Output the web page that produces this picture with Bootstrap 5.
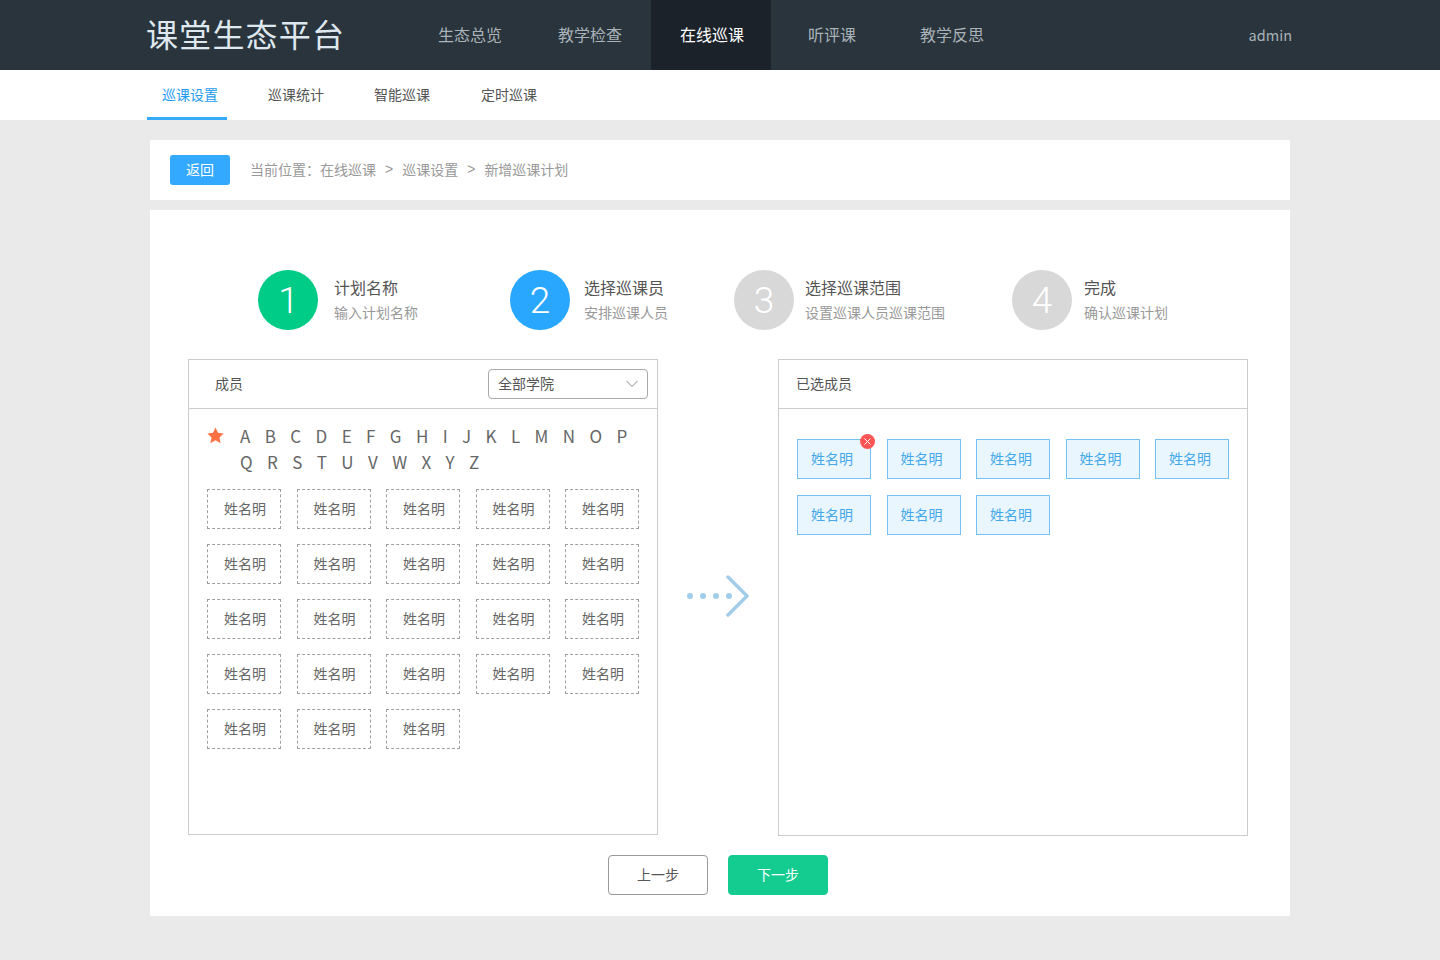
<!DOCTYPE html>
<html lang="zh-CN">
<head>
    <meta charset="UTF-8">
    <title>课堂生态平台</title>
    <link rel="stylesheet" href="https://cdn.jsdelivr.net/npm/bootstrap@5.3.0/dist/css/bootstrap.min.css">
    <style>
        body {
            background-color: #eaeaea;
            font-family: "Noto Sans CJK SC", "Noto Sans", sans-serif;
            font-size: 14px;
            color: #666;
        }
        .topbar { height: 70px; background-color: #29343c; }
        .topbar-inner { width: 1146px; height: 70px; margin: 0 auto; }
        .brand-name { width: 263px; height: 70px; margin-left: -1px; margin-right: 1px; font-size: 32px; letter-spacing: 1.2px; color: #dfe8ee; line-height: 66px; white-space: nowrap; }
        .top-link { width: 120px; height: 70px; line-height: 68px; text-align: center; font-size: 16px; color: #a9b3b9; text-decoration: none; }
        .top-link.is-active { background-color: #1b2229; color: #fff; margin: 0 1px; padding-left: 2px; }
        .admin-name { font-size: 14.5px; color: #a9b3b9; padding-right: 1px; }
        .subbar { height: 50px; background-color: #fff; }
        .sub-link { width: 80px; height: 50px; line-height: 48px; padding-left: 15px; margin-right: 26px; color: #555; text-decoration: none; white-space: nowrap; }
        .sub-link:nth-child(4) { margin-left: 1px; }
        .sub-link.is-active { color: #1f9bf0; border-bottom: 3px solid #33a9ff; }
        .page-wrap { width: 1140px; margin: 20px auto 44px; }
        .crumb-box { height: 60px; padding-left: 20px; background-color: #fff; margin-bottom: 10px; color: #999; }
        .crumb-box span { margin-bottom: 2px; }
        .back-btn { width: 60px; height: 30px; padding: 0 0 2px; margin-right: 20px; font-size: 14px; color: #fff; background-color: #33a9ff; border: 0; border-radius: 3px; }
        .crumb-box .crumb-sep { margin: 0 9px 2px 9px; font-family: "Liberation Sans", sans-serif; }
        .main-box { height: 706px; padding: 60px 38px 0; background-color: #fff; }
        .step-row { height: 60px; padding-left: 70px; margin-bottom: 29px; }
        .step-item:nth-child(1) { margin-right: 92px; }
        .step-item:nth-child(2) { margin-right: 66px; }
        .step-item:nth-child(3) { margin-right: 67px; }
        .step-num { width: 60px; height: 60px; margin-right: 14px; border-radius: 50%; font-size: 37px; font-family: Roboto, sans-serif; font-weight: 300; line-height: 61px; text-align: center; color: #fff; background-color: #d8d8d8; }
        .step-item:nth-child(1) .step-num { background-color: #00cc88; margin-right: 16px; padding-left: 1px; }
        .step-item:nth-child(2) .step-num { background-color: #29a7ff; }
        .step-item:nth-child(3) .step-num { margin-right: 11px; }
        .step-item:nth-child(4) .step-num { margin-right: 12px; }
        .step-title { font-size: 16px; line-height: 24px; color: #555; margin-top: 5px; margin-bottom: 1px; }
        .step-desc { line-height: 24px; color: #999; }
        .pick-panel { width: 470px; height: 476px; border: 1px solid #ccc; border-radius: 0; }
        .pick-panel.is-right { height: 477px; }
        .pick-head { height: 49px; padding: 0 9px 0 26px; background-color: #fff; border-bottom: 1px solid #ccc; border-radius: 0 !important; color: #555; }
        .pick-head span { margin-bottom: 2px; }
        .is-right .pick-head { padding-left: 17px; }
        .college-select { width: 160px; height: 30px; padding: 0 24px 2px 9px; font-size: 14px; color: #555; border-color: #aaa; border-radius: 4px; background-position: right 9px center; background-size: 12px 8px; background-image: url("data:image/svg+xml,%3csvg xmlns='http://www.w3.org/2000/svg' viewBox='0 0 12 8'%3e%3cpath fill='none' stroke='%23888' d='M.5 1l5.5 5.5L11.5 1'/%3e%3c/svg%3e"); }
        .letter-row { padding: 14px 18px 0; margin-bottom: 14px; }
        .star-icon { width: 17px; height: 17px; margin: 4px 16px 0 0; flex: none; }
        .letter-list { width: 400px; column-gap: 14.4px; }
        .letter-list span { font-size: 17px; line-height: 26px; color: #666; }
        .name-grid { display: grid; grid-template-columns: repeat(5, 74px); justify-content: space-between; row-gap: 15px; padding: 0 18px; }
        .is-right .name-grid { padding-top: 30px; row-gap: 16px; }
        .name-tag { position: relative; height: 40px; padding-left: 2px; line-height: 36px; text-align: center; color: #666; border: 1px dashed #a0a0a0; }
        .name-tag.is-picked { padding: 0 4px 0 0; color: #45a8ea; background-color: #e9f6fe; border: 1px solid #76c1f3; }
        .tag-remove { position: absolute; top: -6px; right: -5px; width: 15px; height: 15px; border-radius: 50%; background-color: #f55; }
        .tag-remove svg { display: block; }
        .flow-arrow { width: 120px; margin-bottom: 4px; }
        .foot-btn { width: 100px; height: 40px; padding: 0 0 2px; font-size: 14px; border-radius: 4px; }
        .foot-row { gap: 20px; margin-top: 19px; padding-right: 4px; }
        .prev-btn { color: #555; background: #fff; border: 1px solid #999; }
        .next-btn { color: #fff; background: #14cc8f; border: 1px solid #14cc8f; }
    </style>
</head>
<body>

<header class="topbar">
    <div class="topbar-inner d-flex align-items-center">
        <div class="brand-name">课堂生态平台</div>
        <a class="top-link" href="#">生态总览</a>
        <a class="top-link" href="#">教学检查</a>
        <a class="top-link is-active" href="#">在线巡课</a>
        <a class="top-link" href="#">听评课</a>
        <a class="top-link" href="#">教学反思</a>
        <div class="admin-name ms-auto">admin</div>
    </div>
</header>

<nav class="subbar">
    <div class="topbar-inner d-flex">
        <a class="sub-link is-active" href="#">巡课设置</a>
        <a class="sub-link" href="#">巡课统计</a>
        <a class="sub-link" href="#">智能巡课</a>
        <a class="sub-link" href="#">定时巡课</a>
    </div>
</nav>

<div class="page-wrap">
    <div class="crumb-box d-flex align-items-center">
        <button class="btn back-btn">返回</button>
        <span>当前位置&#xFF1A;在线巡课</span><span class="crumb-sep">&gt;</span><span>巡课设置</span><span class="crumb-sep">&gt;</span><span>新增巡课计划</span>
    </div>

    <div class="main-box">
        <!-- Steps -->
        <div class="step-row d-flex">
            <div class="step-item d-flex">
                <div class="step-num">1</div>
                <div><div class="step-title">计划名称</div><div class="step-desc">输入计划名称</div></div>
            </div>
            <div class="step-item d-flex">
                <div class="step-num">2</div>
                <div><div class="step-title">选择巡课员</div><div class="step-desc">安排巡课人员</div></div>
            </div>
            <div class="step-item d-flex">
                <div class="step-num">3</div>
                <div><div class="step-title">选择巡课范围</div><div class="step-desc">设置巡课人员巡课范围</div></div>
            </div>
            <div class="step-item d-flex">
                <div class="step-num">4</div>
                <div><div class="step-title">完成</div><div class="step-desc">确认巡课计划</div></div>
            </div>
        </div>

        <div class="d-flex align-items-start">
            <!-- Members -->
            <div class="card pick-panel">
                <div class="card-header pick-head d-flex align-items-center justify-content-between">
                    <span>成员</span>
                    <select class="form-select college-select"><option>全部学院</option></select>
                </div>
                <div class="letter-row d-flex">
                    <svg class="star-icon" viewBox="0 0 18 18"><path fill="#ff7043" d="M9 .5l2.6 5.6 6 .7-4.4 4.2 1.2 6.1L9 14.1l-5.4 3 1.2-6.1L.4 6.8l6-.7z"/></svg>
                    <div class="letter-list d-flex flex-wrap">
                        <span>A</span><span>B</span><span>C</span><span>D</span><span>E</span><span>F</span><span>G</span><span>H</span><span>I</span><span>J</span><span>K</span><span>L</span><span>M</span><span>N</span><span>O</span><span>P</span>
                        <span>Q</span><span>R</span><span>S</span><span>T</span><span>U</span><span>V</span><span>W</span><span>X</span><span>Y</span><span>Z</span>
                    </div>
                </div>
                <div class="name-grid">
                    <div class="name-tag">姓名明</div><div class="name-tag">姓名明</div><div class="name-tag">姓名明</div><div class="name-tag">姓名明</div><div class="name-tag">姓名明</div>
                    <div class="name-tag">姓名明</div><div class="name-tag">姓名明</div><div class="name-tag">姓名明</div><div class="name-tag">姓名明</div><div class="name-tag">姓名明</div>
                    <div class="name-tag">姓名明</div><div class="name-tag">姓名明</div><div class="name-tag">姓名明</div><div class="name-tag">姓名明</div><div class="name-tag">姓名明</div>
                    <div class="name-tag">姓名明</div><div class="name-tag">姓名明</div><div class="name-tag">姓名明</div><div class="name-tag">姓名明</div><div class="name-tag">姓名明</div>
                    <div class="name-tag">姓名明</div><div class="name-tag">姓名明</div><div class="name-tag">姓名明</div>
                </div>
            </div>

            <!-- Arrow -->
            <div class="flow-arrow d-flex justify-content-center align-self-center">
                <svg width="64" height="42" viewBox="0 0 64 42">
                    <g fill="#a0cde9"><circle cx="4" cy="21" r="3"/><circle cx="17" cy="21" r="3"/><circle cx="30" cy="21" r="3"/><circle cx="43" cy="21" r="3"/></g>
                    <path d="M42 2l19 19-19 19" fill="none" stroke="#a0cde9" stroke-width="3.4" stroke-linecap="round" stroke-linejoin="round"/>
                </svg>
            </div>

            <!-- Picked -->
            <div class="card pick-panel is-right">
                <div class="card-header pick-head d-flex align-items-center"><span>已选成员</span></div>
                <div class="name-grid">
                    <div class="name-tag is-picked">姓名明
                        <span class="tag-remove"><svg width="15" height="15" viewBox="0 0 15 15"><path d="M4.5 4.5l6 6m0-6l-6 6" stroke="#fff" stroke-width="1" fill="none"/></svg></span>
                    </div>
                    <div class="name-tag is-picked">姓名明</div><div class="name-tag is-picked">姓名明</div><div class="name-tag is-picked">姓名明</div><div class="name-tag is-picked">姓名明</div>
                    <div class="name-tag is-picked">姓名明</div><div class="name-tag is-picked">姓名明</div><div class="name-tag is-picked">姓名明</div>
                </div>
            </div>
        </div>

        <div class="foot-row d-flex justify-content-center">
            <button class="btn foot-btn prev-btn">上一步</button>
            <button class="btn foot-btn next-btn">下一步</button>
        </div>
    </div>
</div>

<script src="https://cdn.jsdelivr.net/npm/bootstrap@5.3.0/dist/js/bootstrap.bundle.min.js"></script>
</body>
</html>
